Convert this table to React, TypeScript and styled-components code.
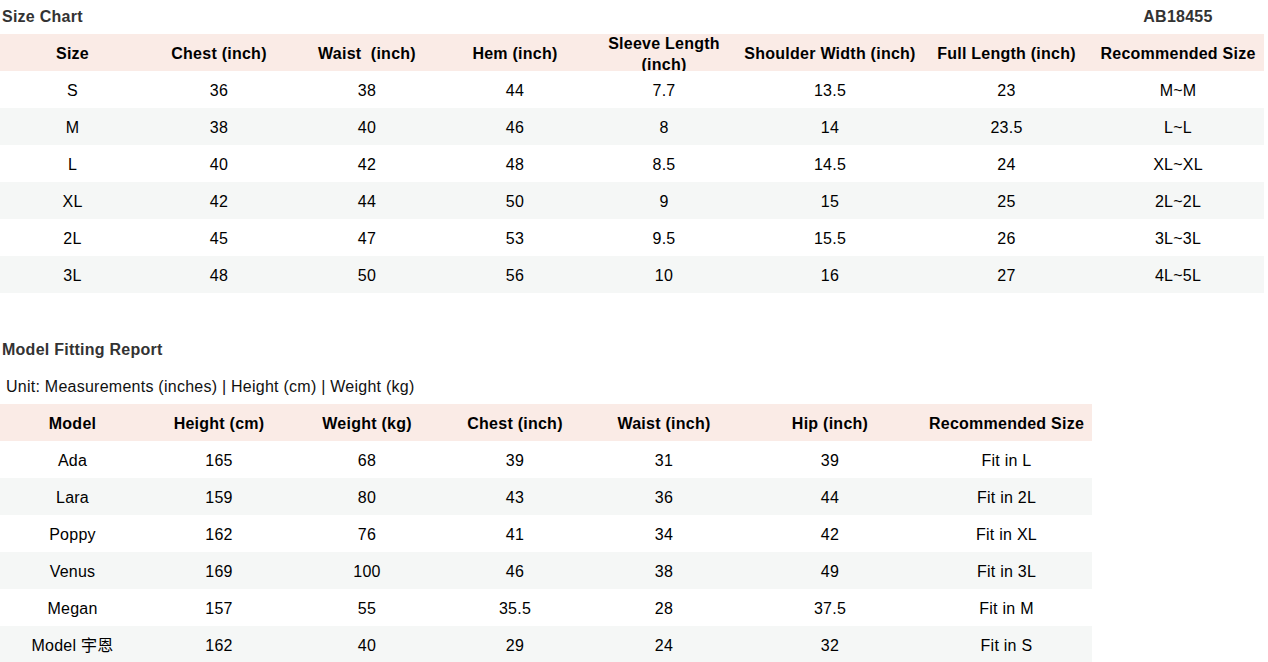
import React from "react";
import styled, { createGlobalStyle } from "styled-components";

const GlobalStyle = createGlobalStyle`
  html, body { margin: 0; padding: 0; background: #ffffff; }
  body { font-family: "Liberation Sans", Arial, "Noto Sans CJK SC", sans-serif; color: #000; letter-spacing: 0.25px; }
`;

const COLS = [145, 148, 148, 148, 150, 182, 171, 172];

const Page = styled.div`
  width: 1268px;
  display: flex;
  flex-direction: column;
`;

const Section = styled.section<{ $gap?: number }>`
  display: flex;
  flex-direction: column;
  margin-top: ${(p) => p.$gap ?? 0}px;
`;

const Grid = styled.div<{ $cols: number[] }>`
  display: grid;
  grid-template-columns: ${(p) => p.$cols.map((c) => `${c}px`).join(" ")};
  width: ${(p) => p.$cols.reduce((a, b) => a + b, 0)}px;
`;

const TitleRow = styled(Grid)`
  height: 34px;
  padding-top: 1px;
  padding-bottom: 1px;
  box-sizing: border-box;
  align-items: center;
`;

const Title = styled.div<{ $span: number }>`
  grid-column: 1 / span ${(p) => p.$span};
  font-weight: bold;
  font-size: 16px;
  color: #333;
  padding-left: 2px;
  line-height: 32px;
`;

const Code = styled.div`
  grid-column: 8 / span 1;
  text-align: center;
  font-weight: bold;
  font-size: 16px;
  color: #333;
  line-height: 32px;
`;

const Unit = styled.div`
  height: 37px;
  line-height: 37px;
  padding-top: 1px;
  box-sizing: border-box;
  padding-left: 6px;
  font-size: 16px;
  color: #111;
`;

const Row = styled(Grid)<{ $bg: string }>`
  height: 37px;
  background: ${(p) => p.$bg};
`;

const Cell = styled.div<{ $head?: boolean }>`
  display: flex;
  align-items: center;
  justify-content: center;
  text-align: center;
  overflow: hidden;
  height: 37px;
  padding: 2px 4px 0;
  box-sizing: border-box;
  font-size: 16px;
  line-height: 21px;
  font-weight: ${(p) => (p.$head ? "bold" : "normal")};
  color: #000;
  white-space: pre-wrap;
`;

const HEAD_BG = "#faebe6";
const ALT_BG = "#f5f7f6";

const sizeHead = [
  "Size",
  "Chest (inch)",
  "Waist  (inch)",
  "Hem (inch)",
  "Sleeve Length (inch)",
  "Shoulder Width (inch)",
  "Full Length (inch)",
  "Recommended Size",
];

const sizeRows = [
  ["S", "36", "38", "44", "7.7", "13.5", "23", "M~M"],
  ["M", "38", "40", "46", "8", "14", "23.5", "L~L"],
  ["L", "40", "42", "48", "8.5", "14.5", "24", "XL~XL"],
  ["XL", "42", "44", "50", "9", "15", "25", "2L~2L"],
  ["2L", "45", "47", "53", "9.5", "15.5", "26", "3L~3L"],
  ["3L", "48", "50", "56", "10", "16", "27", "4L~5L"],
];

const modelHead = [
  "Model",
  "Height (cm)",
  "Weight (kg)",
  "Chest (inch)",
  "Waist (inch)",
  "Hip (inch)",
  "Recommended Size",
];

const modelRows = [
  ["Ada", "165", "68", "39", "31", "39", "Fit in L"],
  ["Lara", "159", "80", "43", "36", "44", "Fit in 2L"],
  ["Poppy", "162", "76", "41", "34", "42", "Fit in XL"],
  ["Venus", "169", "100", "46", "38", "49", "Fit in 3L"],
  ["Megan", "157", "55", "35.5", "28", "37.5", "Fit in M"],
  ["Model 宇恩", "162", "40", "29", "24", "32", "Fit in S"],
];

const Table: React.FC<{ cols: number[]; head: string[]; rows: string[][] }> = ({
  cols,
  head,
  rows,
}) => (
  <div>
    <Row $cols={cols} $bg={HEAD_BG}>
      {head.map((h, i) => (
        <Cell key={i} $head>
          {h}
        </Cell>
      ))}
    </Row>
    {rows.map((r, ri) => (
      <Row key={ri} $cols={cols} $bg={ri % 2 === 1 ? ALT_BG : "#ffffff"}>
        {r.map((c, ci) => (
          <Cell key={ci}>{c}</Cell>
        ))}
      </Row>
    ))}
  </div>
);

export default function App() {
  const modelCols = COLS.slice(0, 7);
  return (
    <Page>
      <GlobalStyle />
      <Section>
        <TitleRow $cols={COLS}>
          <Title $span={7}>Size Chart</Title>
          <Code>AB18455</Code>
        </TitleRow>
        <Table cols={COLS} head={sizeHead} rows={sizeRows} />
      </Section>
      <Section $gap={40}>
        <TitleRow $cols={COLS}>
          <Title $span={7}>Model Fitting Report</Title>
        </TitleRow>
        <Unit>Unit: Measurements (inches) | Height (cm) | Weight (kg)</Unit>
        <Table cols={modelCols} head={modelHead} rows={modelRows} />
      </Section>
    </Page>
  );
}
